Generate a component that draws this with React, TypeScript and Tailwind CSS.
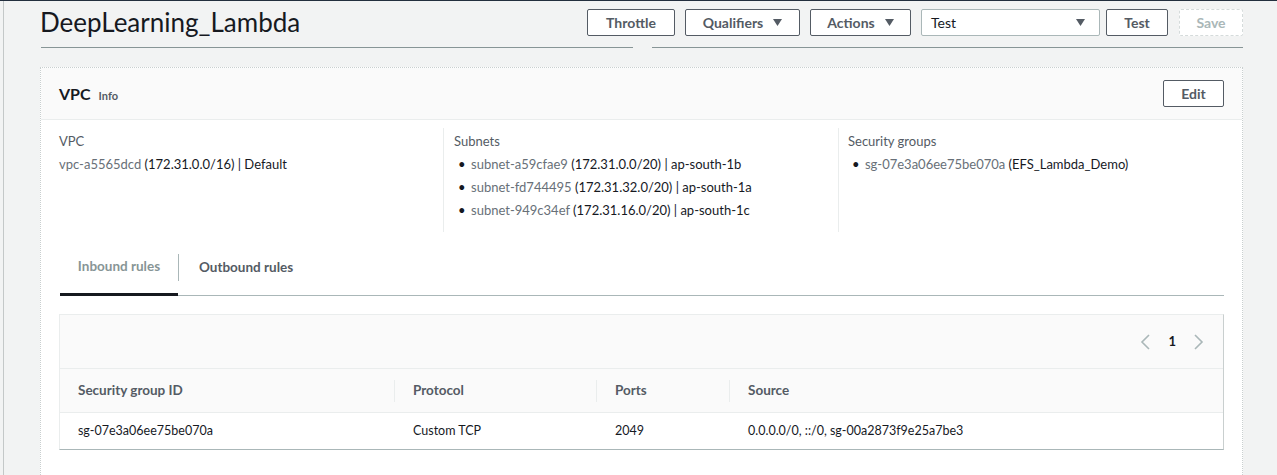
import React from 'react';

const Caret = () => (
    <svg width="9" height="7" viewBox="0 0 9 7" className="shrink-0">
        <path d="M0 0h9L4.5 7z" fill="#545b64" />
    </svg>
);

const Chevron = ({ dir }: { dir: 'left' | 'right' }) => (
    <svg width="10" height="16" viewBox="0 0 10 16">
        <polyline
            points={dir === 'left' ? '9,1 2,8 9,15' : '1,1 8,8 1,15'}
            fill="none"
            stroke="#aab7b8"
            strokeWidth="1.6"
        />
    </svg>
);

const btn =
    'h-[27px] flex items-center justify-center gap-[10px] rounded-[2px] border border-[#545b64] bg-white text-[14px] font-bold text-[#545b64]';

const SUBNETS = [
    { id: 'subnet-a59cfae9', cidr: '(172.31.0.0/20) | ap-south-1b' },
    { id: 'subnet-fd744495', cidr: '(172.31.32.0/20) | ap-south-1a' },
    { id: 'subnet-949c34ef', cidr: '(172.31.16.0/20) | ap-south-1c' },
];

const COLS = ['Security group ID', 'Protocol', 'Ports', 'Source'];
const ROW = ['sg-07e3a06ee75be070a', 'Custom TCP', '2049', '0.0.0.0/0, ::/0, sg-00a2873f9e25a7be3'];

export default function App() {
    return (
        <div className="min-h-[475px] bg-[#f2f3f3] border-t border-[#232f3e] font-['Lato',sans-serif] text-[13px] text-[#16191f]">
            <div className="ml-[3px] min-h-[474px] border-l border-[#c4c8c8] pl-[36px] pr-[34px]">
                {/* page header */}
                <div className="flex items-center justify-between pt-[8px]">
                    <h1 className="text-[26px] leading-[27px] text-[#16191f]">DeepLearning_Lambda</h1>
                    <div className="flex items-center">
                        <button className={`${btn} w-[88px]`}>Throttle</button>
                        <button className={`${btn} w-[115px] ml-[10px]`}>
                            Qualifiers <Caret />
                        </button>
                        <button className={`${btn} w-[101px] ml-[10px]`}>
                            Actions <Caret />
                        </button>
                        <div className="h-[27px] w-[179px] ml-[10px] flex items-center justify-between rounded-[2px] border border-[#aab7b8] bg-white pl-[9px] pr-[14px] text-[14px] text-[#16191f]">
                            Test <Caret />
                        </div>
                        <button className={`${btn} w-[62px] ml-[6px]`}>Test</button>
                        <button className="h-[27px] w-[64px] ml-[11px] rounded-[2px] border border-dashed border-[#d5dbdb] bg-white text-[14px] font-bold text-[#aab7b8]">
                            Save
                        </button>
                    </div>
                </div>
                <div className="mt-[11px] flex">
                    <div className="ml-[1px] h-px w-[592px] bg-[#879596]" />
                    <div className="ml-[19px] h-px flex-1 bg-[#879596]" />
                </div>

                {/* VPC card */}
                <div className="mt-[19px] min-h-[410px] border border-dotted border-[#c9cfcf] bg-white">
                    <div className="h-[52px] flex items-center justify-between border-b border-[#eaeded] bg-[#fafafa] pl-[18px] pr-[18px]">
                        <div className="flex items-baseline">
                            <span className="text-[16px] font-bold">VPC</span>
                            <span className="ml-[8px] text-[11px] font-bold text-[#545b64]">Info</span>
                        </div>
                        <button className={`${btn} w-[61px]`}>Edit</button>
                    </div>

                    <div className="px-[18px] pb-[30px]">
                        <div className="mt-[8px] grid grid-cols-[384px_395px_1fr]">
                            <div className="h-[104px] pt-[2px] leading-[23px]">
                                <div className="text-[#545b64]">VPC</div>
                                <div>
                                    <span className="text-[#687078]">vpc-a5565dcd</span> (172.31.0.0/16) | Default
                                </div>
                            </div>
                            <div className="h-[104px] border-l border-[#eaeded] pl-[10px] pt-[2px] leading-[23px]">
                                <div className="text-[#545b64]">Subnets</div>
                                {SUBNETS.map((s) => (
                                    <div key={s.id} className="flex">
                                        <span className="w-[17px] pl-[4px]">•</span>
                                        <span>
                                            <span className="text-[#687078]">{s.id}</span> {s.cidr}
                                        </span>
                                    </div>
                                ))}
                            </div>
                            <div className="h-[104px] border-l border-[#eaeded] pl-[9px] pt-[2px] leading-[23px]">
                                <div className="text-[#545b64]">Security groups</div>
                                <div className="flex">
                                    <span className="w-[17px] pl-[4px]">•</span>
                                    <span>
                                        <span className="text-[#687078]">sg-07e3a06ee75be070a</span> (EFS_Lambda_Demo)
                                    </span>
                                </div>
                            </div>
                        </div>

                        {/* tabs */}
                        <div className="mt-[11px] ml-[1px] flex border-b border-[#aab7b8] text-[13.5px]">
                            <div className="-mb-px h-[53px] w-[118px] flex items-center justify-center pb-[4px] border-b-[3px] border-[#16191f] font-bold text-[#879596]">
                                Inbound rules
                            </div>
                            <div className="flex items-center pb-[4px]">
                                <div className="h-[27px] w-px bg-[#aab7b8]" />
                            </div>
                            <div className="h-[52px] flex items-center pb-[4px] pl-[20px] pr-[18px] font-bold text-[#545b64]">
                                Outbound rules
                            </div>
                        </div>

                        {/* rules table */}
                        <div className="mt-[18px] border-t border-l border-[#eaeded] border-r border-r-[#c9cfcf] border-r-dotted border-b border-b-[#aab7b8]">
                            <div className="h-[53px] flex items-center justify-end gap-[18px] bg-[#fafafa] pr-[19px]">
                                <Chevron dir="left" />
                                <span className="text-[13px] font-bold">1</span>
                                <Chevron dir="right" />
                            </div>
                            <div className="h-[44px] grid grid-cols-[334px_202px_133px_1fr] border-t border-[#eaeded] bg-[#fafafa] text-[13.5px] font-bold text-[#545b64]">
                                {COLS.map((c, i) => (
                                    <div key={c} className="flex items-center">
                                        {i > 0 && <div className="h-[22px] w-px bg-[#eaeded]" />}
                                        <span className="pl-[18px]">{c}</span>
                                    </div>
                                ))}
                            </div>
                            <div className="h-[37px] grid grid-cols-[334px_202px_133px_1fr] border-t border-[#eaeded] bg-white text-[12.5px]">
                                {ROW.map((v, i) => (
                                    <div key={i} className={`flex items-center ${i > 0 ? 'pl-[19px]' : 'pl-[18px]'}`}>
                                        {v}
                                    </div>
                                ))}
                            </div>
                        </div>
                    </div>
                </div>
            </div>
        </div>
    );
}
